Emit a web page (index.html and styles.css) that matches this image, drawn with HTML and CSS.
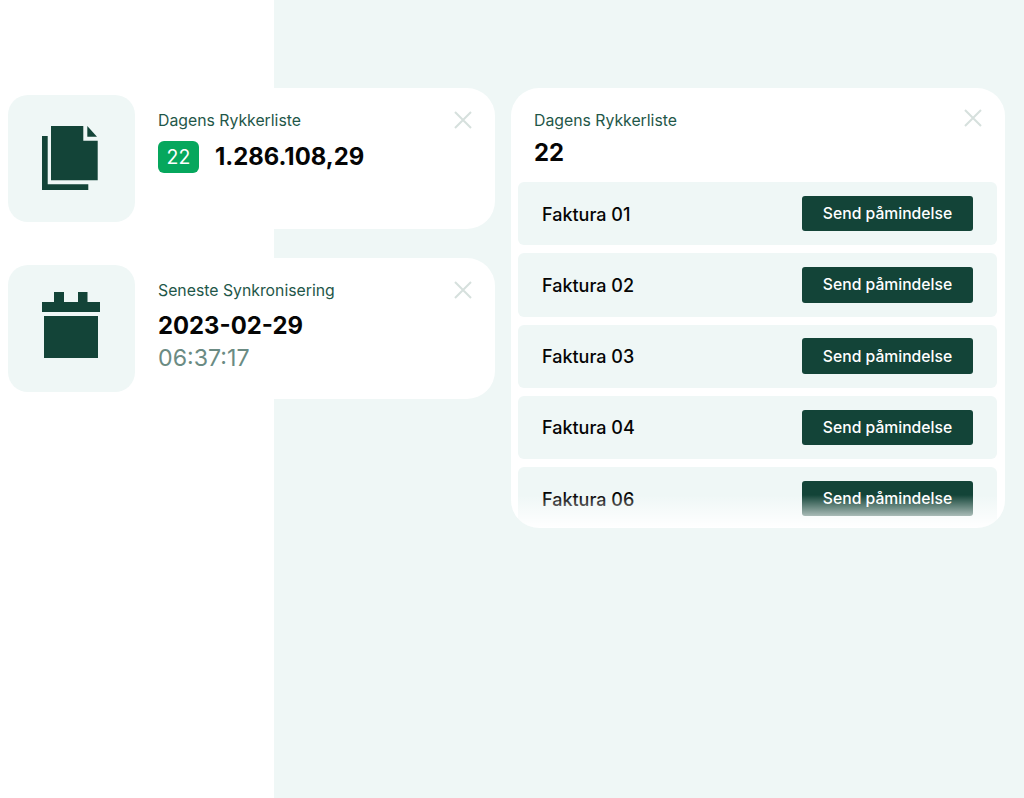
FILE: index.html
```html
<!DOCTYPE html>
<html lang="da">
<head>
<meta charset="utf-8">
<title>Dagens Rykkerliste</title>
<link rel="stylesheet" href="styles.css">
</head>
<body>
<div class="stage">
  <div class="column">
    <section class="card">
      <div class="tile tile-doc">
        <svg class="icon" width="56" height="64" viewBox="0 0 56 64"><path d="M0 10H5.700V58.300H46.300V64H0Z"/><path d="M9 0H41.300V14.700H55.700V54.300H9Z"/><path d="M45.300 0L55 10.700H45.300Z"/></svg>
      </div>
      <div class="info">
        <div class="label">Dagens Rykkerliste</div>
        <div class="amount-row"><span class="badge">22</span><span class="value">1.286.108,29</span></div>
      </div>
      <svg class="close" width="18" height="18" viewBox="0 0 18 18"><path d="M1 1L17 17M17 1L1 17"/></svg>
    </section>
    <section class="card">
      <div class="tile tile-cal">
        <svg class="icon" width="58" height="66" viewBox="0 0 58 66"><path d="M12 0H22V10H36V0H45.500V10H58V20H0V10H12Z"/><path d="M2 24H56V66H2Z"/></svg>
      </div>
      <div class="info">
        <div class="label">Seneste Synkronisering</div>
        <div class="value date">2023-02-29</div>
        <div class="time">06:37:17</div>
      </div>
      <svg class="close" width="18" height="18" viewBox="0 0 18 18"><path d="M1 1L17 17M17 1L1 17"/></svg>
    </section>
  </div>
  <section class="list-card">
    <header class="list-head">
      <div class="label">Dagens Rykkerliste</div>
      <div class="value count">22</div>
      <svg class="close list-close" width="18" height="18" viewBox="0 0 18 18"><path d="M1 1L17 17M17 1L1 17"/></svg>
    </header>
    <div class="rows">
      <div class="row"><span class="row-name">Faktura 01</span><button class="send">Send påmindelse</button></div>
      <div class="row"><span class="row-name">Faktura 02</span><button class="send">Send påmindelse</button></div>
      <div class="row"><span class="row-name">Faktura 03</span><button class="send">Send påmindelse</button></div>
      <div class="row"><span class="row-name">Faktura 04</span><button class="send">Send påmindelse</button></div>
      <div class="row"><span class="row-name">Faktura 06</span><button class="send">Send påmindelse</button></div>
    </div>
    <div class="fade"></div>
  </section>
</div>
</body>
</html>
```
FILE: styles.css
```css
* { box-sizing: border-box; }
html, body { margin: 0; padding: 0; height: 100%; }
body {
  background: #fff;
  font-family: Inter, "Liberation Sans", sans-serif;
  overflow: hidden;
}
.stage {
  position: relative;
  width: 1024px;
  height: 798px;
  display: flex;
  align-items: flex-start;
  gap: 16px;
  padding: 88px 19px 0 0;
  background: linear-gradient(to right, #fff 274px, #eff7f6 274px);
}
.column {
  width: 495px;
  display: flex;
  flex-direction: column;
  gap: 29px;
}
.card {
  position: relative;
  height: 141px;
  padding: 7px 0 0 8px;
  display: flex;
  gap: 23px;
  background: #fff;
  border-radius: 0 28px 28px 0;
}
.tile {
  width: 127px;
  height: 127px;
  flex: none;
  padding-left: 34px;
  background: #eff7f6;
  border-radius: 20px;
}
.tile-doc { padding-top: 31px; }
.tile-cal { padding-top: 27px; }
.icon { fill: #134438; display: block; }
.info { padding-top: 16px; }
.label {
  color: #1f5749;
  font-size: 15.800px;
  line-height: 19px;
  white-space: nowrap;
}
.amount-row {
  display: flex;
  align-items: center;
  gap: 16px;
  margin-top: 11px;
}
.badge {
  width: 41px;
  height: 32px;
  display: flex;
  align-items: center;
  justify-content: center;
  background: #06a75d;
  color: #fff;
  border-radius: 6px;
  font-size: 19.500px;
}
.value {
  color: #050505;
  font-size: 23.850px;
  font-weight: 700;
  line-height: 32px;
}
.date { margin-top: 10px; }
.time {
  color: #6b8b83;
  font-size: 23.200px;
  line-height: 32px;
}
.close {
  position: absolute;
  top: 23px;
  right: 23px;
  fill: none;
  stroke: #d6e0dd;
  stroke-width: 2;
}
.list-card {
  position: relative;
  width: 494px;
  height: 440px;
  overflow: hidden;
  background: #fff;
  border-radius: 28px;
  padding: 0 8px 0 7px;
}
.list-head {
  height: 94px;
  padding: 23px 16px 0;
}
.count { margin-top: 7px; }
.list-close { top: 21px; right: 23px; }
.rows {
  display: flex;
  flex-direction: column;
  gap: 8px;
}
.row {
  height: 63.250px;
  flex: none;
  display: flex;
  align-items: center;
  justify-content: space-between;
  padding: 0 24px;
  background: #eff7f6;
  border-radius: 6px;
  color: #050505;
  font-size: 18px;
  font-weight: 500;
}
.row-name { margin-top: 1px; }
.send {
  width: 171px;
  height: 35.500px;
  border: 0;
  border-radius: 3px;
  background: #134438;
  color: #fff;
  font-family: inherit;
  font-size: 15.700px;
  font-weight: 500;
}
.fade {
  position: absolute;
  left: 0;
  right: 0;
  bottom: 0;
  height: 33px;
  background: linear-gradient(to bottom, rgba(255,255,255,0), #fff);
}
```
